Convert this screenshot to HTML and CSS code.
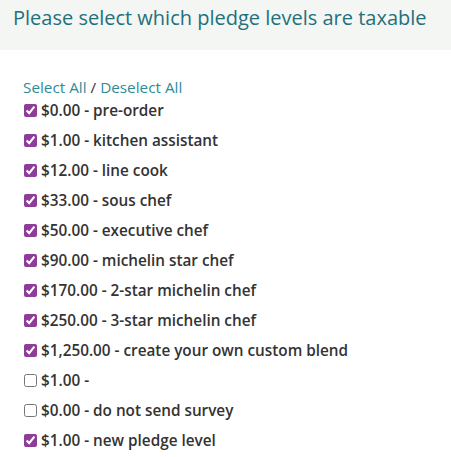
FILE: index.html
```html
<!DOCTYPE html>
<html>
<head>
<meta charset="utf-8">
<link rel="stylesheet" href="styles.css">
</head>
<body>
<div class="header"><h1 class="title">Please select which pledge levels are taxable</h1></div>
<div class="content">
  <div class="links"><a class="link" href="#">Select All</a> / <a class="link" href="#">Deselect All</a></div>
  <ul class="list">
    <li class="item"><input type="checkbox" class="cb" checked><span>$0.00 - pre-order</span></li>
    <li class="item"><input type="checkbox" class="cb" checked><span>$1.00 - kitchen assistant</span></li>
    <li class="item"><input type="checkbox" class="cb" checked><span>$12.00 - line cook</span></li>
    <li class="item"><input type="checkbox" class="cb" checked><span>$33.00 - sous chef</span></li>
    <li class="item"><input type="checkbox" class="cb" checked><span>$50.00 - executive chef</span></li>
    <li class="item"><input type="checkbox" class="cb" checked><span>$90.00 - michelin star chef</span></li>
    <li class="item"><input type="checkbox" class="cb" checked><span>$170.00 - 2-star michelin chef</span></li>
    <li class="item"><input type="checkbox" class="cb" checked><span>$250.00 - 3-star michelin chef</span></li>
    <li class="item"><input type="checkbox" class="cb" checked><span>$1,250.00 - create your own custom blend</span></li>
    <li class="item"><input type="checkbox" class="cb"><span>$1.00 - </span></li>
    <li class="item"><input type="checkbox" class="cb"><span>$0.00 - do not send survey</span></li>
    <li class="item"><input type="checkbox" class="cb" checked><span>$1.00 - new pledge level</span></li>
  </ul>
</div>
</body>
</html>
```

FILE: styles.css
```css
html, body {
  margin: 0;
  padding: 0;
  background: #ffffff;
  font-family: "Open Sans", "Noto Sans", sans-serif;
}
.header {
  background: #f4f6f4;
  height: 50px;
  padding: 0 0 0 13px;
  box-sizing: border-box;
}
.title {
  margin: 0;
  padding-top: 4px;
  font-size: 20px;
  font-weight: 400;
  line-height: 28px;
  color: #23707c;
}
.content {
  padding: 27px 0 0 23px;
}
.links {
  font-size: 15.3px;
  line-height: 20px;
  color: #333333;
}
.link {
  color: #2f8b99;
  text-decoration: none;
}
.list {
  list-style: none;
  margin: 3px 0 0 0;
  padding: 0;
}
.item {
  display: flex;
  align-items: center;
  height: 30px;
  font-size: 15.3px;
  font-weight: 600;
  color: #333333;
}
.item:first-child {
  height: 20px;
  margin-bottom: 5px;
}
.cb {
  width: 13px;
  height: 13px;
  margin: 0 4px 0 1px;
  accent-color: #8e3c98;
}
```
